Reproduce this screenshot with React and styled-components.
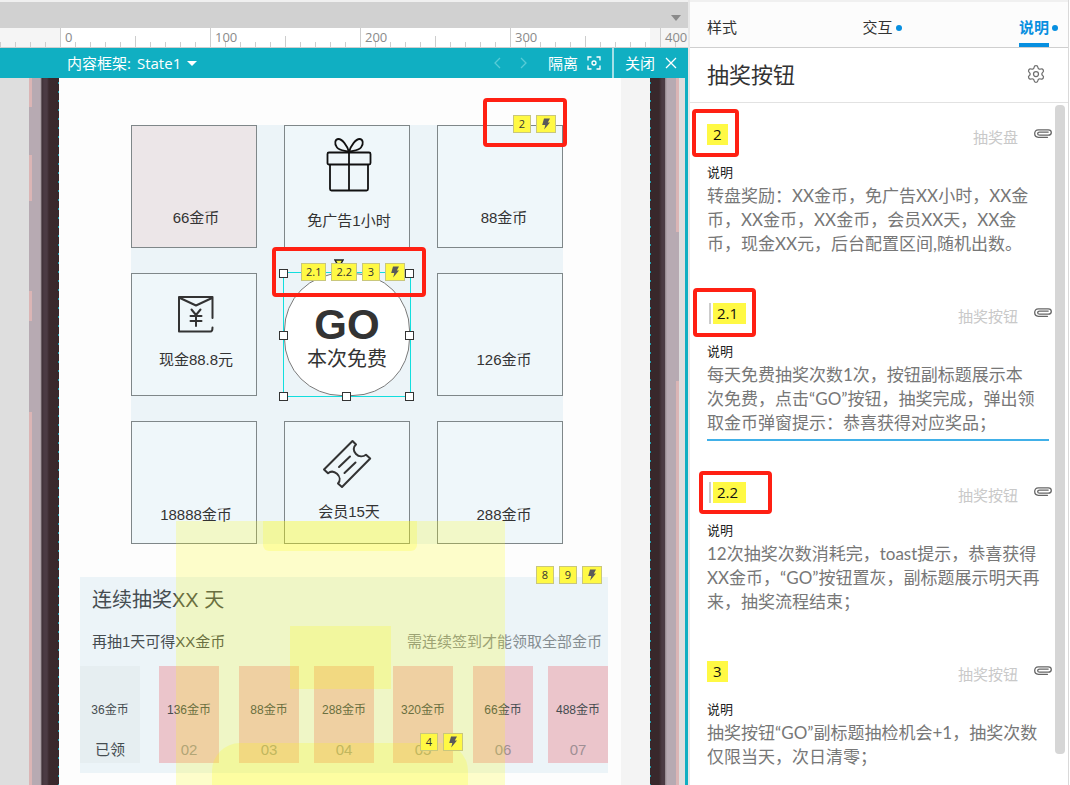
import React from "react";
import styled, { createGlobalStyle, css } from "styled-components";
import { Settings } from "lucide-react";

const ui = '"Open Sans", "Noto Sans CJK SC", sans-serif';
const note = 'Lato, "Noto Sans CJK SC", sans-serif';
const arial = '"Liberation Sans", "Noto Sans CJK SC", sans-serif';
const teal = "#10afc2";

const GlobalStyle = createGlobalStyle`
  * { box-sizing: border-box; }
  body { margin: 0; background: #fff; font-family: ${ui}; }
  button, select, textarea { font: inherit; color: inherit; background: none; border: 0; padding: 0; margin: 0; }
  button { cursor: pointer; }
`;

const Page = styled.div`
  display: flex;
  height: 100vh;
  overflow: hidden;
`;

/* ---------- editor column ---------- */

const Editor = styled.main`
  flex: 1;
  min-width: 0;
  display: flex;
  flex-direction: column;
`;

const TopStrip = styled.div`
  height: 28px;
  border-top: 2px solid #f0f0f0;
  background: #d1d1d1;
  display: flex;
  flex: none;
  justify-content: flex-end;
  align-items: center;
  padding: 6px 7px 0 0;
`;

const Triangle = styled.span`
  display: block;
  border: 5px solid transparent;
  border-top: 6px solid ${(p) => p.$color || "#8a8a8a"};
  border-bottom: 0;
`;

const Caret = styled.span`
  display: block;
  border: 5px solid transparent;
  border-top-color: #fff;
  border-bottom: 0;
`;

const Ruler = styled.div`
  height: 20px;
  flex: none;
  display: flex;
  align-items: flex-end;
  overflow: hidden;
  border-bottom: 1px solid #cfcfcf;
  background: linear-gradient(90deg, #f5f5f5 60px, #fff 60px, #fff 650px, #f5f5f5 650px);
`;

const Tick = styled.span`
  flex: 0 0 15px;
  min-width: 0;
  height: ${(p) => p.$h}px;
  border-left: 1px solid #cdcdcd;
  font-size: 13px;
  line-height: 18px;
  color: #8a8a8a;
  padding-left: 4px;
  white-space: nowrap;
`;

const StateBar = styled.div`
  height: 30px;
  flex: none;
  display: flex;
  align-items: stretch;
  background: ${teal};
  color: #fff;
  font-size: 15px;
  line-height: 30px;
`;

const FrameState = styled.label`
  display: flex;
  align-items: center;
  flex: 1;
  padding-left: 67px;
  gap: 6px;
`;

const StateSelect = styled.select`
  appearance: none;
  width: 44px;
  outline: none;
`;

const BarButton = styled.button`
  display: flex;
  align-items: center;
  gap: ${(p) => (p.$divided ? 10 : 9)}px;
  padding: 0 ${(p) => p.$pad || 10}px;
  ${(p) => p.$divided && css`border-left: 2px solid #a5e0e7;`}
`;

const Stage = styled.div`
  flex: 1;
  min-height: 0;
  display: flex;
  border-right: 3px solid ${teal};
  background: #dedede;
`;

const guide = "repeating-linear-gradient(transparent 0 4px, #1f9dac 4px 6px, transparent 6px 9px)";

const LeftBezel = styled.div`
  flex: 0 0 30px;
  margin-left: 29px;
  background:
    ${guide} 100% 0 / 1px 100% no-repeat,
    linear-gradient(#dbb5b5 29px, transparent 29px, transparent 77px, #dbb5b5 77px, #dbb5b5 123px,
      transparent 123px, transparent 213px, #dbb5b5 213px, #dbb5b5 243px, transparent 243px,
      transparent 334px, #dbb5b5 334px) 0 0 / 3px 100% no-repeat,
    linear-gradient(90deg, #b7aab2 11px, #c6bcc2 11px, #8f8489 12px, #3f3137 13px, #4b3b43 15px,
      #4b3b43 18px, #3a292d 20px, #38282b 30px);
`;

const RightBezel = styled.div`
  flex: 0 0 29px;
  margin-right: 6px;
  background:
    ${guide} 0 0 / 1px 100% no-repeat,
    linear-gradient(#dbb5b5 154px, transparent 154px, transparent 303px, #dbb5b5 303px) 100% 0 / 3px 100% no-repeat,
    linear-gradient(90deg, #38282b 9px, #4b3b43 12px, #4b3b43 15px, #8f8489 15px, #b7aab2 17px);
`;

const Screen = styled.div`
  flex: 1;
  min-width: 0;
  position: relative;
  overflow: hidden;
  border-left: 1px solid #fdfdfd;
  border-right: 1px solid #f4f4f4;
  background: #f4f4f4;
`;

const Artboard = styled.div`
  width: 561px;
  min-height: 100%;
  background: #fdfdfd;
  padding: 47px 0 12px;
`;

const PrizeGrid = styled.section`
  margin-left: 71px;
  width: 432px;
  display: grid;
  grid-template-columns: repeat(3, 126px);
  grid-auto-rows: 123px;
  gap: 25px 27px;
  background: #ecf4f8;
  font-family: ${arial};
`;

const Prize = styled.div`
  display: flex;
  flex-direction: column;
  align-items: center;
  justify-content: flex-end;
  gap: ${(p) => p.$gap || 0}px;
  padding: 0 0 ${(p) => p.$bottom}px 4px;
  border: 1px solid #7f8789;
  background: ${(p) => (p.$hit ? "#ece6e8" : "#eff7fa")};
  color: #333;
  font-size: 15px;
  line-height: 20px;

  &:nth-child(3n) { padding-left: 8px; }
`;

const GoCell = styled.div`
  position: relative;
  box-shadow: 0 0 0 1px #12dede;
`;

const GoButton = styled.button`
  display: flex;
  width: 100%;
  height: 100%;
  border: 1px solid #7a7a7a;
  border-radius: 57px;
  background: #fff;
  color: #333;
  flex-direction: column;
  align-items: center;
  justify-content: center;
  padding-top: 6px;
  font-size: 20px;
  line-height: 26px;

  strong { font-size: 42px; line-height: 42px; }
`;

const Handle = styled.i`
  position: absolute;
  width: 9px;
  height: 9px;
  border: 1px solid #333;
  background: #fff;
  left: ${(p) => p.$x};
  top: ${(p) => p.$y};
  margin: -4px 0 0 -5px;
`;

const CheckIn = styled.section`
  margin: 33px 0 0 20px;
  width: 528px;
  padding: 9px 0 10px;
  background: #ecf4f8;
  color: #454c50;
  font-family: ${arial};
`;

const CheckInTitle = styled.h3`
  margin: 0 0 17px;
  padding-left: 12px;
  font-size: 20px;
  line-height: 28px;
  font-weight: 400;
`;

const CheckInRow = styled.div`
  display: flex;
  justify-content: space-between;
  margin-bottom: 13px;
  padding: 0 6px 0 12px;
  font-size: 15px;
  line-height: 22px;

  span:last-child { color: #858d91; }
`;

const Days = styled.div`
  display: grid;
  grid-template-columns: 79px 80px 75px 79px 80px 75px 60px;
`;

const Day = styled.div`
  width: 60px;
  height: 97px;
  padding-top: 34px;
  display: flex;
  flex-direction: column;
  align-items: center;
  gap: 20px;
  background: ${(p) => (p.$done ? "#e6eef1" : "#ebc5cb")};
  font-size: 12px;
  line-height: 20px;

  span { font-size: 15px; color: ${(p) => (p.$done ? "#454c50" : "#9f8f94")}; }
`;

/* Translucent hot spots and marks that lie over the artboard. */
const HotSpot = styled.div`
  position: absolute;
  left: ${(p) => p.$x}px;
  top: ${(p) => p.$y}px;
  width: ${(p) => p.$w}px;
  ${(p) => (p.$h ? css`height: ${p.$h}px;` : css`bottom: 0;`)}
  border-radius: ${(p) => p.$r || 0};
  background: rgba(255, 255, 0, 0.2);
`;

const RedBox = styled.div`
  position: absolute;
  left: ${(p) => p.$x}px;
  top: ${(p) => p.$y}px;
  width: ${(p) => p.$w}px;
  height: ${(p) => p.$h}px;
  border: 4px solid #ff2013;
  border-radius: 4px;
  pointer-events: none;
`;

const Badges = styled.div`
  position: absolute;
  left: ${(p) => p.$x}px;
  top: ${(p) => p.$y}px;
  display: flex;
  gap: 5px;
`;

const Badge = styled.span`
  min-width: 18px;
  height: 18px;
  padding: 0 ${(p) => (p.$wide ? 4 : 3)}px;
  display: flex;
  align-items: center;
  justify-content: center;
  border: 1px solid #c9c77c;
  background: #fff944;
  color: #333;
  font-size: 11px;
  line-height: 16px;
`;

const Pointer = styled.span`
  position: absolute;
  left: 274px;
  top: 181px;
  line-height: 0;
`;

/* ---------- notes panel ---------- */

const Panel = styled.aside`
  flex: 0 0 382px;
  position: relative;
  display: flex;
  flex-direction: column;
  border-left: 2px solid #e8e8e8;
  background: #fff;
`;

const PanelBody = styled.div`
  flex: 1;
  display: flex;
  flex-direction: column;
  margin-right: 1px;
  border-right: 1px solid #d9d9d9;
`;

const Tabs = styled.nav`
  height: 48px;
  display: flex;
  justify-content: space-between;
  padding: 0 10px 0 17px;
  border-top: 2px solid #f0f0f0;
  border-bottom: 1px solid #cfcfcf;
  background: #fcfcfc;
`;

const Tab = styled.button`
  display: flex;
  align-items: center;
  gap: 3px;
  color: #333;
  font-size: 15px;
  line-height: 20px;

  &:first-child { padding-right: 8px; }

  span {
    height: 45px;
    padding-top: 15px;
    border-bottom: 4px solid transparent;
    ${(p) => p.$active && css`color: #078fe0; font-weight: 700; border-color: #078fe0;`}
  }
`;

const Dot = styled.i`
  width: 6px;
  height: 6px;
  margin-top: 6px;
  border-radius: 50%;
  background: #078fe0;
`;

const PanelHead = styled.header`
  height: 55px;
  display: flex;
  align-items: center;
  justify-content: space-between;
  padding: 0 22px 2px 17px;
  border-bottom: 1px solid #e2e2e2;

  h2 { margin: 0; font-size: 22px; line-height: 30px; font-weight: 400; color: #333; }
  button { line-height: 0; color: #6f6f6f; }
`;

const Scroller = styled.div`
  flex: 1;
  min-height: 0;
  display: flex;
  justify-content: space-between;
  padding: 2px 3px 0 17px;
`;

const Thumb = styled.div`
  flex: 0 0 10px;
  height: 649px;
  border-radius: 4px;
  background: #d6d6d6;
`;

const Notes = styled.div`
  flex: 1;
  min-width: 0;
  padding-top: 19px;
`;

const Note = styled.article`
  height: 179px;
  font-family: ${note};
`;

const NoteHead = styled.div`
  display: flex;
  height: 39px;
  align-items: flex-start;
  padding-right: 3px;
`;

const Tag = styled.span`
  min-width: 21px;
  height: 21px;
  padding: 0 ${(p) => (p.$child ? 8 : 6)}px 0 ${(p) => (p.$child ? 4 : 6)}px;
  background: #fff944;
  color: #111;
  font-family: ${ui};
  font-size: 15px;
  line-height: 20px;
  ${(p) =>
    p.$child &&
    css`
      margin-left: 6px;
      box-shadow: -2px 0 #fff, -4px 0 #ccc;
    `}
`;

const Target = styled.span`
  margin: 3px 16px 0 auto;
  color: #c9c9c9;
  font-size: 15px;
  line-height: 20px;
`;

const ClipButton = styled.button`
  padding-top: 5px;
  line-height: 0;
`;

const FieldLabel = styled.label`
  display: block;
  height: 21px;
  color: #222;
  font-size: 13px;
  line-height: 18px;
`;

const Field = styled.textarea`
  display: block;
  width: 342px;
  height: 78px;
  resize: none;
  outline: none;
  overflow: hidden;
  white-space: pre;
  border-bottom: 2px solid ${(p) => (p.$active ? "#41b0e8" : "transparent")};
  color: #777;
  font-size: 17px;
  line-height: 24px;
`;

/* ---------- drawings ---------- */

const Bolt = () => (
  <svg width="12" height="12" viewBox="0 0 12 12" aria-hidden="true">
    <path d="M4 0.5h6L7.8 4.4H10L4.2 11.6 5.3 7H2.2z" fill="#5a5a5a" />
  </svg>
);

const Clip = () => (
  <svg width="18" height="9" viewBox="0 0 18 9" fill="none" stroke="#666" strokeWidth="1.3" strokeLinecap="round" aria-hidden="true">
    <path d="M13.5 8.3H4.3C2 8.3.7 6.8.7 4.6S2 .8 4.3.8h10c1.8 0 3 1 3 2.700s-1.200 2.700-3 2.700H5.600C4.500 6.200 3.700 5.600 3.700 4.700s.8-1.600 1.900-1.600h8.600" />
  </svg>
);

const Gift = () => (
  <svg width="46" height="56" viewBox="0 0 46 56" fill="none" stroke="#111" strokeWidth="1.8" strokeLinejoin="round" aria-hidden="true">
    <rect x="1.5" y="16.5" width="43" height="12" rx="1.5" />
    <path d="M4 28.5v24.500q0 1.500 1.500 1.500h35q1.500 0 1.500-1.500v-24.500M23 16v38" />
    <path d="M23 16C21 9 16 3 12.500 3S8 8 11 11.500 19 14.500 23 16C25 9 30 3 33.500 3S38 8 35 11.500 27 14.500 23 16z" />
  </svg>
);

const Envelope = () => (
  <svg width="38" height="38" viewBox="0 0 38 38" fill="none" stroke="#333" strokeWidth="2" strokeLinejoin="round" strokeLinecap="round" aria-hidden="true">
    <path d="M35.500 23V2H2v34.500h31.500q2 0 2-4M3 3l16 7.500L35 3" />
    <path d="M14.500 14.500 19 20l4.500-5.500M13.500 21h11M13.500 26h11M19 20v11" />
  </svg>
);

const Ticket = () => (
  <svg width="54" height="50" viewBox="0 0 54 50" fill="none" stroke="#333" strokeWidth="2" strokeLinejoin="round" strokeLinecap="round" aria-hidden="true">
    <path d="M30.500 2 34 5.500C31 8 31 12 34 15s7 3 10 .8l4.200 3.700L20 48l-4-3.500c2.500-3 2-7-1-9.700s-6-3-9-.5L2 30.500z" />
    <path d="M28 17.500 17 28M33.500 23.500 22.500 34" />
  </svg>
);

const Focus = () => (
  <svg width="14" height="14" viewBox="0 0 14 14" fill="none" stroke="#fff" strokeWidth="1.3" aria-hidden="true">
    <path d="M1 4.500V1h3.500M9.500 1H13v3.500M13 9.500V13H9.500M4.500 13H1V9.500" />
    <circle cx="7" cy="7" r="2" />
  </svg>
);

const Chevron = ({ right }) => (
  <svg width="7" height="12" viewBox="0 0 7 12" fill="none" stroke="#58cbd6" strokeWidth="1.3" aria-hidden="true">
    <path d={right ? "M1 1l5 5-5 5" : "M6 1L1 6l5 5"} />
  </svg>
);

const Cross = () => (
  <svg width="12" height="12" viewBox="0 0 12 12" stroke="#fff" strokeWidth="1.3" aria-hidden="true">
    <path d="M1 1l10 10M11 1L1 11" />
  </svg>
);

/* ---------- data ---------- */

const ticks = Array.from({ length: 46 }, (_, i) => {
  const step = i - 4;
  if (step >= 0 && step % 10 === 0) return { h: 19, label: step * 10 };
  return { h: step > 0 && step % 5 === 0 ? 11 : 5 };
});

const prizes = [
  { name: "66金币", bottom: 19, hit: true },
  { name: "免广告1小时", bottom: 16, gap: 19, icon: <Gift /> },
  { name: "88金币", bottom: 19 },
  { name: "现金88.8元", bottom: 25, gap: 17, icon: <Envelope /> },
  { go: true },
  { name: "126金币", bottom: 25 },
  { name: "18888金币", bottom: 18 },
  { name: "会员15天", bottom: 21, gap: 13, icon: <Ticket /> },
  { name: "288金币", bottom: 18 },
];

const days = [
  ["36金币", "已领"],
  ["136金币", "02"],
  ["88金币", "03"],
  ["288金币", "04"],
  ["320金币", "05"],
  ["66金币", "06"],
  ["488金币", "07"],
];

const handles = [
  ["0%", "0%"], ["100%", "0%"], ["0%", "50%"], ["100%", "50%"],
  ["0%", "100%"], ["50%", "100%"], ["100%", "100%"],
];

const notes = [
  { id: "2", target: "抽奖盘", text: "转盘奖励：XX金币，免广告XX小时，XX金\n币，XX金币，XX金币，会员XX天，XX金\n币，现金XX元，后台配置区间,随机出数。" },
  { id: "2.1", target: "抽奖按钮", active: true, text: "每天免费抽奖次数1次，按钮副标题展示本\n次免费，点击“GO”按钮，抽奖完成，弹出领\n取金币弹窗提示：恭喜获得对应奖品；" },
  { id: "2.2", target: "抽奖按钮", text: "12次抽奖次数消耗完，toast提示，恭喜获得\nXX金币，“GO”按钮置灰，副标题展示明天再\n来，抽奖流程结束；" },
  { id: "3", target: "抽奖按钮", text: "抽奖按钮“GO”副标题抽检机会+1，抽奖次数\n仅限当天，次日清零；" },
];

const BadgeGroup = ({ x, y, ids }) => (
  <Badges $x={x} $y={y}>
    {ids.map((id) => (
      <Badge key={id} $wide={id.length > 1}>{id}</Badge>
    ))}
    <Badge><Bolt /></Badge>
  </Badges>
);

export default function App() {
  return (
    <Page lang="zh-CN">
      <GlobalStyle />
      <Editor>
        <TopStrip><Triangle /></TopStrip>
        <Ruler>
          {ticks.map((t, i) => (
            <Tick key={i} $h={t.h}>{t.label}</Tick>
          ))}
        </Ruler>
        <StateBar>
          <FrameState>
            内容框架:
            <StateSelect defaultValue="State1"><option>State1</option></StateSelect>
            <Caret />
          </FrameState>
          <BarButton $pad={9} aria-label="上一个"><Chevron /></BarButton>
          <BarButton $pad={10} aria-label="下一个"><Chevron right /></BarButton>
          <BarButton $pad={11}><span>隔离</span><Focus /></BarButton>
          <BarButton $pad={11} $divided><span>关闭</span><Cross /></BarButton>
        </StateBar>
        <Stage>
          <LeftBezel />
          <Screen>
            <Artboard>
              <PrizeGrid>
                {prizes.map((p, i) =>
                  p.go ? (
                    <GoCell key={i}>
                      <GoButton><strong>GO</strong>本次免费</GoButton>
                      {handles.map(([x, y]) => <Handle key={x + y} $x={x} $y={y} />)}
                    </GoCell>
                  ) : (
                    <Prize key={i} $bottom={p.bottom} $gap={p.gap} $hit={p.hit}>
                      {p.icon}
                      <span>{p.name}</span>
                    </Prize>
                  )
                )}
              </PrizeGrid>
              <CheckIn>
                <CheckInTitle>连续抽奖XX 天</CheckInTitle>
                <CheckInRow><span>再抽1天可得XX金币</span><span>需连续签到才能领取全部金币</span></CheckInRow>
                <Days>
                  {days.map(([coins, day], i) => (
                    <Day key={day} $done={i === 0}>{coins}<span>{day}</span></Day>
                  ))}
                </Days>
              </CheckIn>
            </Artboard>
            <HotSpot $x={116} $y={443} $w={329} />
            <HotSpot $x={203} $y={443} $w={154} $h={30} $r="0 0 6px 6px" />
            <HotSpot $x={230} $y={548} $w={101} $h={63} />
            <HotSpot $x={152} $y={665} $w={256} $r="28px 28px 0 0" />
            <Pointer>
              <svg width="10" height="8" viewBox="0 0 10 8" aria-hidden="true">
                <path d="M1 1h8L5 8z" fill="#fff944" stroke="#222" strokeWidth="1.5" />
              </svg>
            </Pointer>
            <BadgeGroup x={453} y={37} ids={["2"]} />
            <BadgeGroup x={241} y={185} ids={["2.1", "2.2", "3"]} />
            <BadgeGroup x={476} y={488} ids={["8", "9"]} />
            <BadgeGroup x={360} y={655} ids={["4"]} />
            <RedBox $x={423} $y={20} $w={84} $h={49} />
            <RedBox $x={212} $y={169} $w={154} $h={50} />
          </Screen>
          <RightBezel />
        </Stage>
      </Editor>
      <Panel>
        <PanelBody>
          <Tabs>
            <Tab><span>样式</span></Tab>
            <Tab><span>交互</span><Dot /></Tab>
            <Tab $active><span>说明</span><Dot /></Tab>
          </Tabs>
          <PanelHead>
            <h2>抽奖按钮</h2>
            <button aria-label="设置"><Settings size={20} strokeWidth={1.5} /></button>
          </PanelHead>
          <Scroller>
            <Notes>
              {notes.map((n) => (
                <Note key={n.id}>
                  <NoteHead>
                    <Tag $child={n.id.length > 1}>{n.id}</Tag>
                    <Target>{n.target}</Target>
                    <ClipButton aria-label="附加"><Clip /></ClipButton>
                  </NoteHead>
                  <FieldLabel htmlFor={"note-" + n.id}>说明</FieldLabel>
                  <Field id={"note-" + n.id} $active={n.active} defaultValue={n.text} spellCheck={false} />
                </Note>
              ))}
            </Notes>
            <Thumb />
          </Scroller>
        </PanelBody>
        <RedBox $x={2} $y={109} $w={47} $h={48} />
        <RedBox $x={3} $y={288} $w={63} $h={49} />
        <RedBox $x={9} $y={471} $w={73} $h={43} />
      </Panel>
    </Page>
  );
}
